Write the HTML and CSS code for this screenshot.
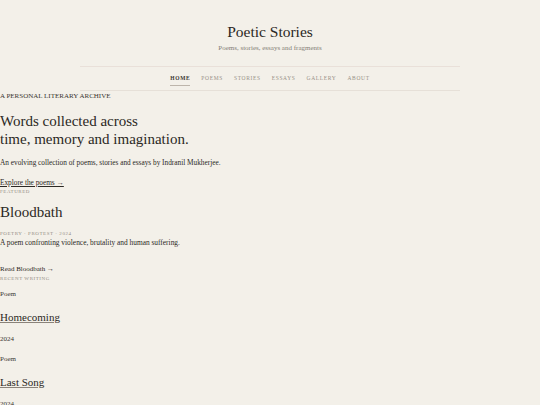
FILE: index.html
```html
<!DOCTYPE html>
<html lang="en">
<head>
<meta charset="utf-8">
<title>Poetic Stories</title>
<link rel="stylesheet" href="styles.css">
</head>
<body>
<header class="site-header">
  <h1 class="site-title">Poetic Stories</h1>
  <p class="site-tagline">Poems, stories, essays and fragments</p>
  <nav class="site-nav">
    <ul class="nav-list">
      <li><a class="nav-link active" href="#">Home</a></li>
      <li><a class="nav-link" href="#">Poems</a></li>
      <li><a class="nav-link" href="#">Stories</a></li>
      <li><a class="nav-link" href="#">Essays</a></li>
      <li><a class="nav-link" href="#">Gallery</a></li>
      <li><a class="nav-link" href="#">About</a></li>
    </ul>
  </nav>
</header>
<main class="content">
  <section class="hero">
    <p class="eyebrow">A PERSONAL LITERARY ARCHIVE</p>
    <h2 class="hero-title">Words collected across<br>time, memory and imagination.</h2>
    <p class="hero-text">An evolving collection of poems, stories and essays by Indranil Mukherjee.</p>
    <a class="hero-link" href="#">Explore the poems →</a>
  </section>
  <section class="featured">
    <p class="label">Featured</p>
    <h2 class="featured-title">Bloodbath</h2>
    <p class="meta">Poetry · Protest · 2024</p>
    <p class="featured-text">A poem confronting violence, brutality and human suffering.</p>
    <a class="read-link" href="#">Read Bloodbath →</a>
  </section>
  <section class="recent">
    <p class="label">Recent Writing</p>
    <article class="entry">
      <p class="entry-type">Poem</p>
      <h3 class="entry-title"><a href="#">Homecoming</a></h3>
      <p class="entry-year">2024</p>
    </article>
    <article class="entry">
      <p class="entry-type">Poem</p>
      <h3 class="entry-title"><a href="#">Last Song</a></h3>
      <p class="entry-year">2024</p>
    </article>
  </section>
</main>
</body>
</html>
```

FILE: styles.css
```css
html, body {
  margin: 0;
  padding: 0;
}

body {
  background: #f3f0e9;
  color: #2c2925;
  font-family: "Liberation Serif", "Times New Roman", serif;
}

p, h1, h2, h3, ul {
  margin: 0;
  padding: 0;
}

a {
  color: inherit;
}

/* Header */
.site-header {
  padding-top: 23px;
  text-align: center;
}

.site-title {
  font-size: 15.5px;
  line-height: 18px;
  font-weight: normal;
  color: #2b2824;
}

.site-tagline {
  margin-top: 2px;
  font-size: 7px;
  line-height: 10px;
  color: #847e76;
}

.site-nav {
  width: 380px;
  margin: 13px auto 0;
  border-top: 1px solid #e9e0d9;
  border-bottom: 1px solid #e6e0d8;
}

.nav-list {
  list-style: none;
  display: flex;
  justify-content: center;
  gap: 11px;
  padding: 7px 0 4px;
}

.nav-link {
  display: block;
  font-size: 5.5px;
  line-height: 8px;
  letter-spacing: 0.65px;
  text-transform: uppercase;
  text-decoration: none;
  color: #989188;
  padding-bottom: 3px;
  border-bottom: 1px solid transparent;
}

.nav-link.active {
  color: #3a3631;
  font-weight: bold;
  border-bottom-color: #bdb5ab;
}

/* Content */
.eyebrow {
  font-size: 7px;
  line-height: 10px;
  color: #3a3631;
}

.hero-title {
  margin-top: 11px;
  font-size: 15px;
  line-height: 18px;
  font-weight: normal;
  color: #2b2824;
}

.hero-text {
  margin-top: 10px;
  font-size: 7.3px;
  line-height: 10px;
}

.hero-link {
  display: block;
  margin-top: 10px;
  font-size: 7.3px;
  line-height: 10px;
}

.label {
  font-size: 5px;
  line-height: 8px;
  letter-spacing: 0.55px;
  text-transform: uppercase;
  color: #948d84;
}

.featured-title {
  margin-top: 7px;
  font-size: 15px;
  line-height: 18px;
  font-weight: normal;
  color: #2b2824;
}

.meta {
  margin-top: 9px;
  font-size: 5px;
  line-height: 8px;
  letter-spacing: 0.55px;
  text-transform: uppercase;
  color: #948d84;
}

.featured-text {
  font-size: 7.4px;
  line-height: 9px;
}

.read-link {
  display: block;
  margin-top: 17px;
  font-size: 7px;
  line-height: 10px;
  text-decoration: none;
}

.recent .label {
  margin-top: 1px;
}

.entry {
  padding-top: 6px;
}

.entry + .entry {
  padding-top: 10px;
}

.entry-type {
  font-size: 7px;
  line-height: 10px;
  color: #3a3631;
}

.entry-title {
  margin-top: 11px;
  font-size: 11px;
  line-height: 14px;
  font-weight: normal;
}

.entry-title a {
  text-decoration: underline;
  text-decoration-color: #8a837a;
}

.entry-year {
  margin-top: 10px;
  font-size: 7px;
  line-height: 10px;
  color: #3a3631;
}
```
